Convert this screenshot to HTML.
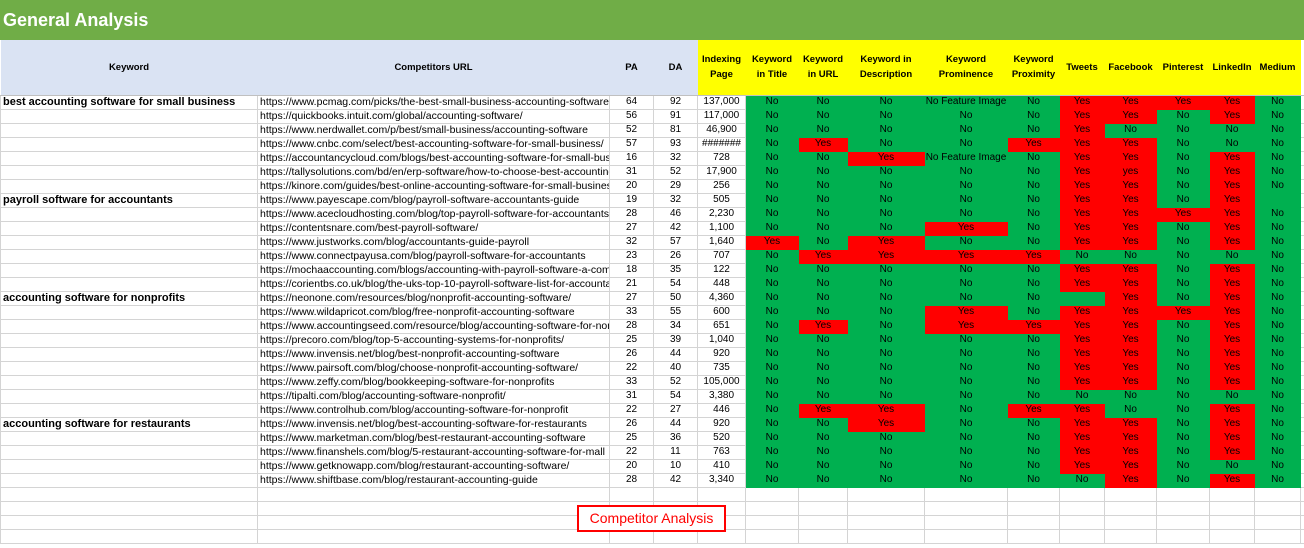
<!DOCTYPE html>
<html><head><meta charset="utf-8">
<style>
*{margin:0;padding:0;box-sizing:border-box}
body{width:1304px;height:548px;overflow:hidden;background:#fff;font-family:"Liberation Sans",Arial,sans-serif;position:relative}
.title{position:absolute;left:0;top:0;width:1304px;height:40px;background:#70ad47;color:#fff;font-weight:bold;font-size:18px;line-height:40px;padding-left:3px}
table{position:absolute;left:0;top:40px;border-collapse:collapse;table-layout:fixed;width:1304px}
td{border:1px solid #d4d4d4;height:14px;font-size:10px;line-height:12px;text-align:center;white-space:nowrap;overflow:hidden;padding:0;color:#000}
tr.h td{height:55px;font-weight:bold;font-size:9.5px;line-height:15px;border:none;border-bottom:1px solid #c0c0c0}
tr.h td.b{background:#dae3f3}
tr.h td.y{background:#ffff00}
tr.d td:nth-child(n+6){background:#00b050;border-color:#00b050}
tr.d td.r{background:#ff0000;border-color:#ff0000}
td.k{text-align:left;font-weight:bold;padding-left:2px;font-size:11px}
td.u{text-align:left;padding-left:2px;font-size:10.5px}
.box{position:absolute;left:577px;top:505px;width:149px;height:27px;border:2px solid #ff0000;color:#ff0000;font-size:14px;line-height:23px;text-align:center;background:#fff}
</style></head><body>
<div class="title">General Analysis</div>
<table>
<colgroup><col style="width:257px"><col style="width:352px"><col style="width:44px"><col style="width:44px"><col style="width:48px"><col style="width:53px"><col style="width:49px"><col style="width:77px"><col style="width:83px"><col style="width:52px"><col style="width:45px"><col style="width:52px"><col style="width:53px"><col style="width:45px"><col style="width:46px"><col style="width:4px"></colgroup>
<tr class="h"><td class="b">Keyword</td><td class="b">Competitors URL</td><td class="b">PA</td><td class="b">DA</td><td class="y">Indexing<br>Page</td><td class="y">Keyword<br>in Title</td><td class="y">Keyword<br>in URL</td><td class="y">Keyword in<br>Description</td><td class="y">Keyword<br>Prominence</td><td class="y">Keyword<br>Proximity</td><td class="y">Tweets</td><td class="y">Facebook</td><td class="y">Pinterest</td><td class="y">LinkedIn</td><td class="y">Medium</td><td style="background:#fff"></td></tr>
<tr class="d"><td class="k">best accounting software for small business</td><td class="u">https://www.pcmag.com/picks/the-best-small-business-accounting-software</td><td>64</td><td>92</td><td>137,000</td><td>No</td><td>No</td><td>No</td><td>No Feature Image</td><td>No</td><td class="r">Yes</td><td class="r">Yes</td><td class="r">Yes</td><td class="r">Yes</td><td>No</td><td style="background:#fff;border-color:#d4d4d4"></td></tr>
<tr class="d"><td class="k"></td><td class="u">https://quickbooks.intuit.com/global/accounting-software/</td><td>56</td><td>91</td><td>117,000</td><td>No</td><td>No</td><td>No</td><td>No</td><td>No</td><td class="r">Yes</td><td class="r">Yes</td><td>No</td><td class="r">Yes</td><td>No</td><td style="background:#fff;border-color:#d4d4d4"></td></tr>
<tr class="d"><td class="k"></td><td class="u">https://www.nerdwallet.com/p/best/small-business/accounting-software</td><td>52</td><td>81</td><td>46,900</td><td>No</td><td>No</td><td>No</td><td>No</td><td>No</td><td class="r">Yes</td><td>No</td><td>No</td><td>No</td><td>No</td><td style="background:#fff;border-color:#d4d4d4"></td></tr>
<tr class="d"><td class="k"></td><td class="u">https://www.cnbc.com/select/best-accounting-software-for-small-business/</td><td>57</td><td>93</td><td>#######</td><td>No</td><td class="r">Yes</td><td>No</td><td>No</td><td class="r">Yes</td><td class="r">Yes</td><td class="r">Yes</td><td>No</td><td>No</td><td>No</td><td style="background:#fff;border-color:#d4d4d4"></td></tr>
<tr class="d"><td class="k"></td><td class="u">https://accountancycloud.com/blogs/best-accounting-software-for-small-business</td><td>16</td><td>32</td><td>728</td><td>No</td><td>No</td><td class="r">Yes</td><td>No Feature Image</td><td>No</td><td class="r">Yes</td><td class="r">Yes</td><td>No</td><td class="r">Yes</td><td>No</td><td style="background:#fff;border-color:#d4d4d4"></td></tr>
<tr class="d"><td class="k"></td><td class="u">https://tallysolutions.com/bd/en/erp-software/how-to-choose-best-accounting-software</td><td>31</td><td>52</td><td>17,900</td><td>No</td><td>No</td><td>No</td><td>No</td><td>No</td><td class="r">Yes</td><td class="r">yes</td><td>No</td><td class="r">Yes</td><td>No</td><td style="background:#fff;border-color:#d4d4d4"></td></tr>
<tr class="d"><td class="k"></td><td class="u">https://kinore.com/guides/best-online-accounting-software-for-small-business</td><td>20</td><td>29</td><td>256</td><td>No</td><td>No</td><td>No</td><td>No</td><td>No</td><td class="r">Yes</td><td class="r">Yes</td><td>No</td><td class="r">Yes</td><td>No</td><td style="background:#fff;border-color:#d4d4d4"></td></tr>
<tr class="d"><td class="k">payroll software for accountants</td><td class="u">https://www.payescape.com/blog/payroll-software-accountants-guide</td><td>19</td><td>32</td><td>505</td><td>No</td><td>No</td><td>No</td><td>No</td><td>No</td><td class="r">Yes</td><td class="r">Yes</td><td>No</td><td class="r">Yes</td><td></td><td style="background:#fff;border-color:#d4d4d4"></td></tr>
<tr class="d"><td class="k"></td><td class="u">https://www.acecloudhosting.com/blog/top-payroll-software-for-accountants</td><td>28</td><td>46</td><td>2,230</td><td>No</td><td>No</td><td>No</td><td>No</td><td>No</td><td class="r">Yes</td><td class="r">Yes</td><td class="r">Yes</td><td class="r">Yes</td><td>No</td><td style="background:#fff;border-color:#d4d4d4"></td></tr>
<tr class="d"><td class="k"></td><td class="u">https://contentsnare.com/best-payroll-software/</td><td>27</td><td>42</td><td>1,100</td><td>No</td><td>No</td><td>No</td><td class="r">Yes</td><td>No</td><td class="r">Yes</td><td class="r">Yes</td><td>No</td><td class="r">Yes</td><td>No</td><td style="background:#fff;border-color:#d4d4d4"></td></tr>
<tr class="d"><td class="k"></td><td class="u">https://www.justworks.com/blog/accountants-guide-payroll</td><td>32</td><td>57</td><td>1,640</td><td class="r">Yes</td><td>No</td><td class="r">Yes</td><td>No</td><td>No</td><td class="r">Yes</td><td class="r">Yes</td><td>No</td><td class="r">Yes</td><td>No</td><td style="background:#fff;border-color:#d4d4d4"></td></tr>
<tr class="d"><td class="k"></td><td class="u">https://www.connectpayusa.com/blog/payroll-software-for-accountants</td><td>23</td><td>26</td><td>707</td><td>No</td><td class="r">Yes</td><td class="r">Yes</td><td class="r">Yes</td><td class="r">Yes</td><td>No</td><td>No</td><td>No</td><td>No</td><td>No</td><td style="background:#fff;border-color:#d4d4d4"></td></tr>
<tr class="d"><td class="k"></td><td class="u">https://mochaaccounting.com/blogs/accounting-with-payroll-software-a-complete-guide</td><td>18</td><td>35</td><td>122</td><td>No</td><td>No</td><td>No</td><td>No</td><td>No</td><td class="r">Yes</td><td class="r">Yes</td><td>No</td><td class="r">Yes</td><td>No</td><td style="background:#fff;border-color:#d4d4d4"></td></tr>
<tr class="d"><td class="k"></td><td class="u">https://corientbs.co.uk/blog/the-uks-top-10-payroll-software-list-for-accountants</td><td>21</td><td>54</td><td>448</td><td>No</td><td>No</td><td>No</td><td>No</td><td>No</td><td class="r">Yes</td><td class="r">Yes</td><td>No</td><td class="r">Yes</td><td>No</td><td style="background:#fff;border-color:#d4d4d4"></td></tr>
<tr class="d"><td class="k">accounting software for nonprofits</td><td class="u">https://neonone.com/resources/blog/nonprofit-accounting-software/</td><td>27</td><td>50</td><td>4,360</td><td>No</td><td>No</td><td>No</td><td>No</td><td>No</td><td></td><td class="r">Yes</td><td>No</td><td class="r">Yes</td><td>No</td><td style="background:#fff;border-color:#d4d4d4"></td></tr>
<tr class="d"><td class="k"></td><td class="u">https://www.wildapricot.com/blog/free-nonprofit-accounting-software</td><td>33</td><td>55</td><td>600</td><td>No</td><td>No</td><td>No</td><td class="r">Yes</td><td>No</td><td class="r">Yes</td><td class="r">Yes</td><td class="r">Yes</td><td class="r">Yes</td><td>No</td><td style="background:#fff;border-color:#d4d4d4"></td></tr>
<tr class="d"><td class="k"></td><td class="u">https://www.accountingseed.com/resource/blog/accounting-software-for-nonprofits</td><td>28</td><td>34</td><td>651</td><td>No</td><td class="r">Yes</td><td>No</td><td class="r">Yes</td><td class="r">Yes</td><td class="r">Yes</td><td class="r">Yes</td><td>No</td><td class="r">Yes</td><td>No</td><td style="background:#fff;border-color:#d4d4d4"></td></tr>
<tr class="d"><td class="k"></td><td class="u">https://precoro.com/blog/top-5-accounting-systems-for-nonprofits/</td><td>25</td><td>39</td><td>1,040</td><td>No</td><td>No</td><td>No</td><td>No</td><td>No</td><td class="r">Yes</td><td class="r">Yes</td><td>No</td><td class="r">Yes</td><td>No</td><td style="background:#fff;border-color:#d4d4d4"></td></tr>
<tr class="d"><td class="k"></td><td class="u">https://www.invensis.net/blog/best-nonprofit-accounting-software</td><td>26</td><td>44</td><td>920</td><td>No</td><td>No</td><td>No</td><td>No</td><td>No</td><td class="r">Yes</td><td class="r">Yes</td><td>No</td><td class="r">Yes</td><td>No</td><td style="background:#fff;border-color:#d4d4d4"></td></tr>
<tr class="d"><td class="k"></td><td class="u">https://www.pairsoft.com/blog/choose-nonprofit-accounting-software/</td><td>22</td><td>40</td><td>735</td><td>No</td><td>No</td><td>No</td><td>No</td><td>No</td><td class="r">Yes</td><td class="r">Yes</td><td>No</td><td class="r">Yes</td><td>No</td><td style="background:#fff;border-color:#d4d4d4"></td></tr>
<tr class="d"><td class="k"></td><td class="u">https://www.zeffy.com/blog/bookkeeping-software-for-nonprofits</td><td>33</td><td>52</td><td>105,000</td><td>No</td><td>No</td><td>No</td><td>No</td><td>No</td><td class="r">Yes</td><td class="r">Yes</td><td>No</td><td class="r">Yes</td><td>No</td><td style="background:#fff;border-color:#d4d4d4"></td></tr>
<tr class="d"><td class="k"></td><td class="u">https://tipalti.com/blog/accounting-software-nonprofit/</td><td>31</td><td>54</td><td>3,380</td><td>No</td><td>No</td><td>No</td><td>No</td><td>No</td><td>No</td><td>No</td><td>No</td><td>No</td><td>No</td><td style="background:#fff;border-color:#d4d4d4"></td></tr>
<tr class="d"><td class="k"></td><td class="u">https://www.controlhub.com/blog/accounting-software-for-nonprofit</td><td>22</td><td>27</td><td>446</td><td>No</td><td class="r">Yes</td><td class="r">Yes</td><td>No</td><td class="r">Yes</td><td class="r">Yes</td><td>No</td><td>No</td><td class="r">Yes</td><td>No</td><td style="background:#fff;border-color:#d4d4d4"></td></tr>
<tr class="d"><td class="k">accounting software for restaurants</td><td class="u">https://www.invensis.net/blog/best-accounting-software-for-restaurants</td><td>26</td><td>44</td><td>920</td><td>No</td><td>No</td><td class="r">Yes</td><td>No</td><td>No</td><td class="r">Yes</td><td class="r">Yes</td><td>No</td><td class="r">Yes</td><td>No</td><td style="background:#fff;border-color:#d4d4d4"></td></tr>
<tr class="d"><td class="k"></td><td class="u">https://www.marketman.com/blog/best-restaurant-accounting-software</td><td>25</td><td>36</td><td>520</td><td>No</td><td>No</td><td>No</td><td>No</td><td>No</td><td class="r">Yes</td><td class="r">Yes</td><td>No</td><td class="r">Yes</td><td>No</td><td style="background:#fff;border-color:#d4d4d4"></td></tr>
<tr class="d"><td class="k"></td><td class="u">https://www.finanshels.com/blog/5-restaurant-accounting-software-for-mall</td><td>22</td><td>11</td><td>763</td><td>No</td><td>No</td><td>No</td><td>No</td><td>No</td><td class="r">Yes</td><td class="r">Yes</td><td>No</td><td class="r">Yes</td><td>No</td><td style="background:#fff;border-color:#d4d4d4"></td></tr>
<tr class="d"><td class="k"></td><td class="u">https://www.getknowapp.com/blog/restaurant-accounting-software/</td><td>20</td><td>10</td><td>410</td><td>No</td><td>No</td><td>No</td><td>No</td><td>No</td><td class="r">Yes</td><td class="r">Yes</td><td>No</td><td>No</td><td>No</td><td style="background:#fff;border-color:#d4d4d4"></td></tr>
<tr class="d"><td class="k"></td><td class="u">https://www.shiftbase.com/blog/restaurant-accounting-guide</td><td>28</td><td>42</td><td>3,340</td><td>No</td><td>No</td><td>No</td><td>No</td><td>No</td><td>No</td><td class="r">Yes</td><td>No</td><td class="r">Yes</td><td>No</td><td style="background:#fff;border-color:#d4d4d4"></td></tr>
<tr><td></td><td></td><td></td><td></td><td></td><td></td><td></td><td></td><td></td><td></td><td></td><td></td><td></td><td></td><td></td><td></td></tr>
<tr><td></td><td></td><td></td><td></td><td></td><td></td><td></td><td></td><td></td><td></td><td></td><td></td><td></td><td></td><td></td><td></td></tr>
<tr><td></td><td></td><td></td><td></td><td></td><td></td><td></td><td></td><td></td><td></td><td></td><td></td><td></td><td></td><td></td><td></td></tr>
<tr><td></td><td></td><td></td><td></td><td></td><td></td><td></td><td></td><td></td><td></td><td></td><td></td><td></td><td></td><td></td><td></td></tr>
</table>
<div class="box">Competitor Analysis</div>
</body></html>
